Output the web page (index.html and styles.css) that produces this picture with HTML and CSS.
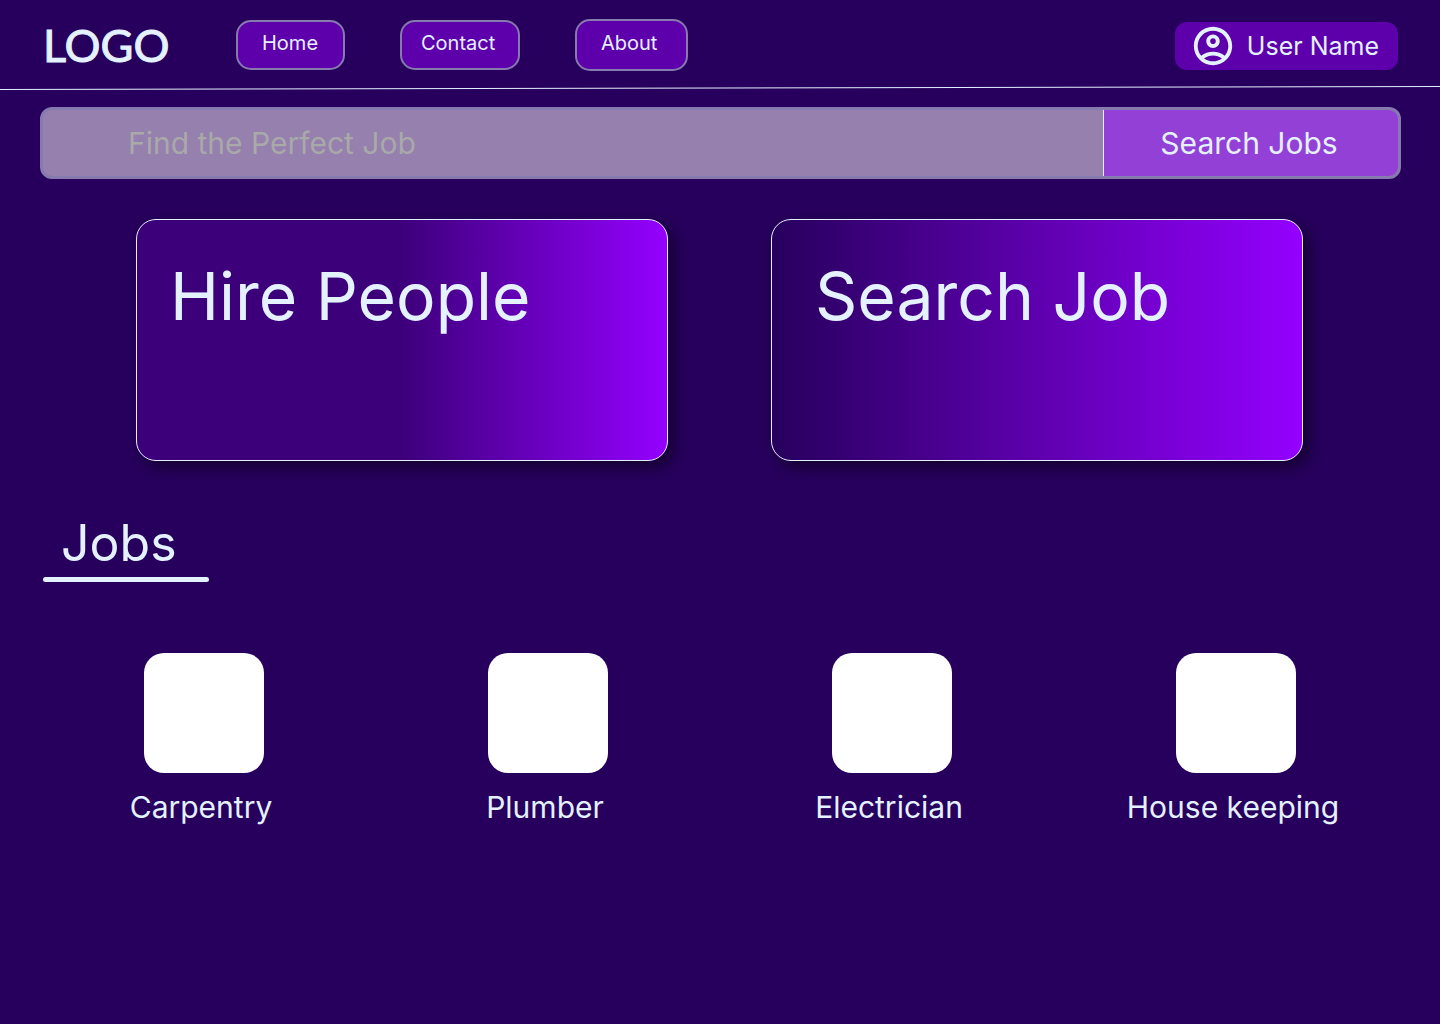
FILE: index.html
```html
<!DOCTYPE html>
<html lang="en">
<head>
<meta charset="utf-8">
<meta name="viewport" content="width=device-width, initial-scale=1">
<title>Find the Perfect Job</title>
<link rel="stylesheet" href="styles.css">
</head>
<body>
<header class="header">
  <a class="logo" href="#">LOGO</a>
  <nav class="nav" aria-label="Main">
    <a class="nav-link nav-link-home" href="#">Home</a>
    <a class="nav-link nav-link-contact" href="#">Contact</a>
    <a class="nav-link nav-link-about" href="#">About</a>
  </nav>
  <button class="user" type="button">
    <svg class="user-icon" viewBox="0 0 24 24" aria-hidden="true"><path d="M12 2C6.48 2 2 6.48 2 12s4.48 10 10 10 10-4.48 10-10S17.52 2 12 2zM7.35 18.5C8.66 17.56 10.26 17 12 17s3.34.56 4.65 1.5C15.34 19.44 13.74 20 12 20s-3.34-.56-4.65-1.5zm10.79-1.38C16.45 15.8 14.32 15 12 15s-4.45.8-6.14 2.12C4.7 15.73 4 13.95 4 12c0-4.42 3.58-8 8-8s8 3.58 8 8c0 1.95-.7 3.73-1.86 5.12zM12 6c-1.93 0-3.5 1.57-3.5 3.5S10.07 13 12 13s3.5-1.57 3.5-3.5S13.93 6 12 6zm0 5c-.83 0-1.5-.67-1.5-1.5S11.17 8 12 8s1.5.67 1.5 1.5S12.83 11 12 11z"/></svg>
    <span>User Name</span>
  </button>
</header>
<svg class="divider" viewBox="0 0 1440 4" preserveAspectRatio="none" aria-hidden="true"><line x1="0" y1="3.5" x2="1440" y2="0.5"/></svg>
<main>
  <form class="search" role="search">
    <input class="search-input" type="text" placeholder="Find the Perfect Job" aria-label="Find the Perfect Job">
    <button class="search-button" type="submit">Search Jobs</button>
  </form>
  <div class="cards">
    <a class="card card-hire" href="#">Hire People</a>
    <a class="card card-search" href="#">Search Job</a>
  </div>
  <section class="jobs">
    <h2 class="jobs-title">Jobs</h2>
    <div class="job-grid">
      <a class="job" href="#"><span class="job-tile"></span><span class="job-label">Carpentry</span></a>
      <a class="job" href="#"><span class="job-tile"></span><span class="job-label">Plumber</span></a>
      <a class="job" href="#"><span class="job-tile"></span><span class="job-label">Electrician</span></a>
      <a class="job" href="#"><span class="job-tile"></span><span class="job-label">House keeping</span></a>
    </div>
  </section>
</main>
</body>
</html>
```
FILE: styles.css
```css
* { box-sizing: border-box; }

body {
  margin: 0;
  min-height: 100vh;
  background: #27005d;
  color: #e4f1ff;
  font-family: Inter, "Liberation Sans", sans-serif;
  font-weight: 400;
}

a { color: inherit; text-decoration: none; }
button, input { font: inherit; color: inherit; }
button { cursor: pointer; }

.header {
  display: flex;
  align-items: center;
  height: 86px;
  padding: 4px 42px 0 43px;
}

.logo {
  width: 193px;
  font-family: Lato, sans-serif;
  font-size: 45px;
  font-weight: 400;
  line-height: 50px;
  -webkit-text-stroke: 1px #e4f1ff;
}

.nav { display: flex; align-items: center; gap: 55px; }

.nav-link {
  height: 50px;
  border: 2px solid #867aae;
  border-radius: 15px;
  background: #5d00ac;
  font-size: 20px;
  line-height: 42px;
}
.nav-link-home { width: 109px; padding-left: 24px; }
.nav-link-contact { width: 120px; padding-left: 19px; }
.nav-link-about { width: 113px; height: 52px; padding-left: 24px; line-height: 44px; }

.user {
  display: flex;
  align-items: center;
  gap: 11px;
  height: 48px;
  margin: 2px 0 0 auto;
  padding: 0 19px 0 15px;
  border: 0;
  border-radius: 12px;
  background: #5d00ac;
  font-size: 25px;
}
.user-icon { width: 46px; height: 46px; fill: #e4f1ff; }

.divider { display: block; width: 100%; height: 4px; }
.divider line { stroke: #e4f1ff; stroke-width: 1; }

.search {
  display: flex;
  height: 72px;
  margin: 17px 39px 0 40px;
  overflow: hidden;
  border: 3px solid #867aae;
  border-radius: 12px;
  background: #9580ae;
  font-size: 30px;
}
.search-input {
  flex: 1;
  min-width: 0;
  padding: 0 0 0 85px;
  border: 0;
  outline: 0;
  background: transparent;
}
.search-input::placeholder { color: #a9a9a9; opacity: 1; }
.search-button {
  width: 295px;
  padding: 0 4px 0 0;
  border: 0;
  border-left: 1px solid #e4f1ff;
  background: #9340d6;
}

.cards {
  display: grid;
  grid-template-columns: 1fr 1fr;
  gap: 103px;
  padding: 40px 137px 0 136px;
}
.card {
  min-height: 242px;
  border: 1px solid #e4f1ff;
  border-radius: 20px;
  box-shadow: 6px 6px 16px rgba(0, 0, 0, 0.5);
  font-size: 66px;
  line-height: 80px;
}
.card-hire {
  padding: 36px 0 0 33px;
  background: linear-gradient(90deg, #3b007a 0%, #3d007b 50%, #9400ff 100%);
}
.card-search {
  padding: 36px 0 0 43px;
  background: linear-gradient(90deg, #27005d 0%, #9400ff 100%);
}

.jobs { padding: 50px 32px 40px; }
.jobs-title {
  width: 166px;
  margin: 0 0 0 11px;
  font-size: 50px;
  font-weight: 400;
  line-height: 64px;
  text-indent: 18px;
}
.jobs-title::after {
  content: "";
  display: block;
  height: 5px;
  margin-top: 2px;
  border-radius: 3px;
  background: #e4f1ff;
}
.job-grid {
  display: grid;
  grid-template-columns: repeat(4, 1fr);
  margin-top: 71px;
}
.job { display: flex; flex-direction: column; align-items: center; gap: 16px; }
.job-tile { width: 120px; height: 120px; border-radius: 20px; background: #fff; }
.job-label { padding-right: 6px; font-size: 30px; line-height: 36px; }
```
